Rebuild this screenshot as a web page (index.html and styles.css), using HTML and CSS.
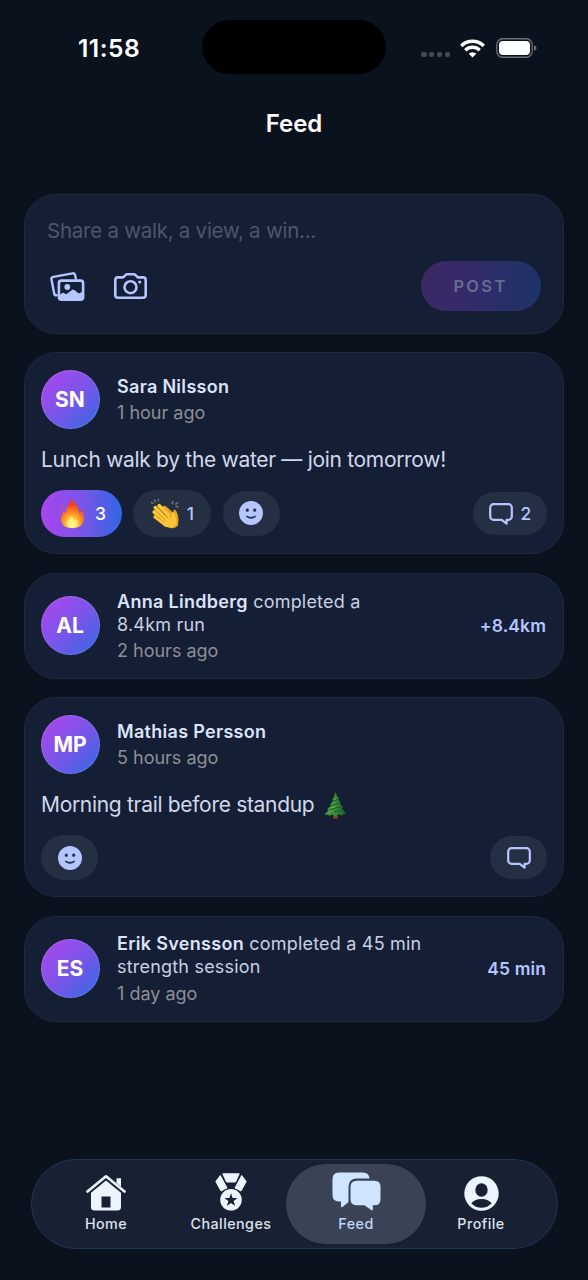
FILE: index.html
```html
<!DOCTYPE html>
<html lang="en">
<head>
<meta charset="utf-8">
<title>Feed</title>
<link rel="stylesheet" href="styles.css">
</head>
<body>
<svg class="defs" width="0" height="0" aria-hidden="true">
  <symbol id="smile" viewBox="0 0 24 24"><path fill="#b4c5ff" fill-rule="evenodd" d="M12 0a12 12 0 1 0 0 24a12 12 0 0 0 0-24zM8.300 7.600a1.600 1.600 0 0 1 0 3.200a1.600 1.600 0 0 1 0-3.200zm7.400 0a1.600 1.600 0 0 1 0 3.200a1.600 1.600 0 0 1 0-3.200zM7.600 14.600q4.300 2.800 8.800 0l.6 1.200q-5 4-10 0z"/></symbol>
  <symbol id="comment" viewBox="0 0 24 22"><path fill="none" stroke="#b4c5ff" stroke-width="2.200" stroke-linejoin="round" d="M4.500 1.200h15a3.300 3.300 0 0 1 3.300 3.300v9a3.300 3.300 0 0 1-3.300 3.300h-1.900v3.900L12.700 16.800H4.500a3.300 3.300 0 0 1-3.300-3.300V4.500A3.300 3.300 0 0 1 4.500 1.200z"/></symbol>
</svg>
<div class="screen">
  <header class="status">
    <span class="clock">11:58</span>
    <span class="island"></span>
    <span class="indicators">
      <span class="dots"><i></i><i></i><i></i><i></i></span>
      <svg class="wifi" viewBox="0 0 25 19"><g fill="none" stroke="#fff" stroke-width="3.500"><path d="M1.300 6.900a16 16 0 0 1 22.400 0"/><path d="M5.300 11.300a10.300 10.300 0 0 1 14.400 0"/></g><path fill="#fff" d="M12.500 18.500l-3.800-3.800a5.500 5.500 0 0 1 7.600 0z"/></svg>
      <svg class="battery" viewBox="0 0 41 20"><rect x=".75" y=".75" width="35.500" height="18.500" rx="6" fill="none" stroke="#6b7078" stroke-width="1.300"/><rect x="3" y="3" width="31" height="14" rx="4" fill="#fff"/><path d="M38 7.200q2.600.900 2.600 2.800T38 12.800z" fill="#6b7078"/></svg>
    </span>
  </header>
  <h1 class="title">Feed</h1>
  <main class="feed">
    <section class="card composer">
      <p class="placeholder">Share a walk, a view, a win...</p>
      <div class="composer-row">
        <svg class="ic-gallery" viewBox="0 0 35 29"><path fill="none" stroke="#b4c5ff" stroke-width="2.400" stroke-linejoin="round" stroke-linecap="round" d="M6.500 23.300Q4.500 23.500 4.200 21.500L1.500 7.500Q1.100 5.300 3.300 4.900L22.500 1.400Q24.600 1 25.100 3l.7 3.600"/><path fill="#b4c5ff" fill-rule="evenodd" d="M11.300 7.300h19.400a3.700 3.700 0 0 1 3.700 3.700v14.200a3.700 3.700 0 0 1-3.700 3.700H11.300a3.700 3.700 0 0 1-3.700-3.700V11a3.700 3.700 0 0 1 3.700-3.700zm.3 2.600Q10.200 9.900 10.200 11.300V22.500l2.100-1.400q1-.6 2 .1l2 1.100 5.500-4.300q1.200-.9 2.500.1l4.500 3.500 3-1.600V11.300q0-1.400-1.400-1.400z"/><circle cx="17.300" cy="15" r="2.900" fill="#b4c5ff"/></svg>
        <svg class="ic-camera" viewBox="0 0 33 26"><path fill="none" stroke="#b4c5ff" stroke-width="2.600" stroke-linejoin="round" d="M4 4.400h5.200L11.700 1.900q.5-.6 1.500-.6h6.600q1 0 1.500.6l2.500 2.500H29q2.700 0 2.700 2.700v14.900q0 2.700-2.700 2.700H4q-2.700 0-2.700-2.700V7.100Q1.300 4.400 4 4.400z"/><circle cx="16.500" cy="14.200" r="6" fill="none" stroke="#b4c5ff" stroke-width="2.600"/><circle cx="25.700" cy="9" r="1.600" fill="#b4c5ff"/></svg>
        <button class="post-btn">POST</button>
      </div>
    </section>

    <article class="card">
      <div class="who">
        <span class="avatar">SN</span>
        <div class="meta"><p><b>Sara Nilsson</b></p><time>1 hour ago</time></div>
      </div>
      <p class="body">Lunch walk by the water — join tomorrow!</p>
      <div class="actions tall">
        <span class="pill fire"><svg class="e-fire" viewBox="0 0 26 31"><defs><radialGradient id="f" cx=".48" cy=".88" r=".72"><stop offset="0" stop-color="#fff9a0"/><stop offset=".25" stop-color="#ffd84a"/><stop offset=".55" stop-color="#ff9426"/><stop offset="1" stop-color="#f43a18"/></radialGradient></defs><path fill="url(#f)" d="M12 .5C10.500 5 6.500 8 6 14.500 5.500 16 4.800 15.500 4.300 13 1.500 16.500.5 19 1 22.500 1.800 28 6.500 30.800 13 30.800S24.500 27.500 25 21.500c.2-4-1.300-6.500-1-10.500-2 .8-2.700 2.500-3 5.500C18.500 11 20 9.500 16.500 5.500 14.500 3.500 12.500 3 12 .5z"/><path fill="#f4562a" d="M4 7.500q-2.500 2-2 4 2-.5 2-4z"/><path fill="#fff18c" opacity=".8" d="M12 18c-1 3.500-5 5-4.500 8.500.4 3 3 4 5.500 4s5.500-1.500 5.500-5c0-2-1-2.500-1.500-4.500-1 .5-1.500 1.500-1.800 2.500C14 21.500 14 20 12 18z"/></svg><span>3</span></span>
        <span class="pill clap"><svg class="e-clap" viewBox="0 0 30 31"><g stroke="#77797a" stroke-width="1.500" stroke-linecap="round"><path d="M4.500 1.500l1 2M1.500 4l1.500 1M8.500 1l.2 1.500M23.500 3l-.6 2.500M28.500 4.500l-2 1.200M29 8.500l-2-.200"/></g><path fill="#e9a51d" d="M13 8.500q2-2 4 0l8 7-1-3q1.500-1.800 3.200.5 2 4 2.300 8.500L29 28q-3 3.500-8 2.500z"/><g stroke="#fcc63a" stroke-width="3.900" stroke-linecap="round"><path d="M9.500 7.500l13 13M5.700 9.500l13 14M4.500 14l12.500 11.500M5.500 19l11 8.500"/></g><path fill="#fcc63a" d="M21 19.500l1-3.500q.5-2.500 3-1.500l2 6q1.500 6-2 8.500-4 2.500-8.500 0L13 26z"/><g fill="none" stroke="#c9811a" stroke-width=".8" stroke-linecap="round"><path d="M8.300 9.500l10 10.500M6 12.700l10 9.800M6 17.300l8 7M21.200 19.500l.8-3"/></g></svg><span>1</span></span>
        <span class="pill add"><svg class="ic-smile"><use href="#smile"/></svg></span>
        <span class="pill talk"><svg class="ic-comment"><use href="#comment"/></svg><span>2</span></span>
      </div>
    </article>

    <article class="card event">
      <span class="avatar">AL</span>
      <div class="meta"><p><b>Anna Lindberg</b> completed a 8.4km&nbsp;run</p><time>2 hours ago</time></div>
      <strong class="stat">+8.4km</strong>
    </article>

    <article class="card second">
      <div class="who">
        <span class="avatar">MP</span>
        <div class="meta"><p><b>Mathias Persson</b></p><time>5 hours ago</time></div>
      </div>
      <p class="body">Morning trail before standup <svg class="e-tree" viewBox="0 0 24 28"><defs><linearGradient id="t"><stop offset="0" stop-color="#4fa23e"/><stop offset=".5" stop-color="#3a8b36"/><stop offset="1" stop-color="#155a2f"/></linearGradient></defs><path fill="#8a4a1c" d="M10 23h4l.5 4.500h-5z"/><path fill="url(#t)" d="M12 0l1.500 4 2.500 3-1.500.3 3.500 4-1.800.4 4 4.300-2 .4L23.500 23l-3-.3-2 2-3-1.500L12 25l-3.500-1.700-3 1.500-1.500-1.300-3.500.5L5 18.500l-2-.3 5-4.700-2-.2L10 9l-1.800-.2L10.500 5z"/><path fill="none" stroke="#16582b" stroke-width=".9" d="M9 9.500l5-1.700M8 13.500l8-2.500M6 18.300l12-3.200M5 22l15-3.500"/><path fill="none" stroke="#79c062" stroke-width=".7" d="M10 7.500l2.500-.7M8.500 12l4-1.200M6.500 16.800l5-1.300M4 22l6-1.700"/></svg></p>
      <div class="actions">
        <span class="pill add"><svg class="ic-smile"><use href="#smile"/></svg></span>
        <span class="pill talk empty"><svg class="ic-comment"><use href="#comment"/></svg></span>
      </div>
    </article>

    <article class="card event">
      <span class="avatar">ES</span>
      <div class="meta"><p><b>Erik Svensson</b> completed a 45 min strength session</p><time>1 day ago</time></div>
      <strong class="stat">45 min</strong>
    </article>
  </main>

  <nav class="tabs">
    <a class="tab"><svg width="40" height="37" viewBox="0 0 40 37"><path fill="none" stroke="#ebf4ff" stroke-width="2.700" stroke-linecap="round" stroke-linejoin="round" d="M1.500 17.500L20 2.300l18.500 15.200"/><path fill="#ebf4ff" d="M30.500 4.300h4.500v8.500l-4.500-3.700z"/><path fill="#ebf4ff" fill-rule="evenodd" d="M20 6.500L35 18.700V33q0 3.500-3.500 3.500h-23Q5 36.500 5 33V18.700zM15.500 22.500v11h9v-11z"/></svg><span>Home</span></a>
    <a class="tab"><svg width="32" height="38" viewBox="0 0 32 38"><path fill="#ebf4ff" stroke="#ebf4ff" stroke-linejoin="round" d="M7.800.8h16.400L20.500 9h-9zM5.300 2.500L.8 8.500l5.200 9.500 6-3zM26.700 2.500l4.500 6-5.200 9.500-6-3z"/><circle cx="16" cy="27" r="12" fill="#182033"/><path fill="#ebf4ff" fill-rule="evenodd" d="M16 16a10.800 10.800 0 0 0 0 21.600A10.800 10.800 0 0 0 16 16zm0 4.300l1.600 4.700h5l-4 3.100 1.500 4.900-4.100-3-4.100 3 1.500-4.900-4-3.100h5z"/></svg><span>Challenges</span></a>
    <a class="tab active"><svg width="49" height="39" viewBox="0 0 49 39"><path fill="#cfe5ff" d="M7 .5h24q6 0 6.500 6H25q-8.500 0-8.500 8.500v15L10.500 35q-1.500 1-1.500-1v-4.500H7Q.5 29.500.5 23V7Q.5.5 7 .5z"/><path fill="#cfe5ff" d="M25 8.700h17.500q6 0 6 6v12.500q0 6-6 6h-1.700v4q0 2-1.600.9L32.500 33.200H25q-6.500 0-6.500-6V14.700q0-6 6.500-6z"/></svg><span>Feed</span></a>
    <a class="tab"><svg width="35" height="35" viewBox="0 0 35 35"><circle cx="17.500" cy="17.500" r="17.200" fill="#ebf4ff"/><ellipse cx="17.500" cy="14" rx="6.200" ry="6.700" fill="#182033"/><path fill="#182033" d="M7.300 27.300q3.500-4.300 10.200-4.300t10.200 4.300q-4.200 4.500-10.200 4.500T7.300 27.300z"/></svg><span>Profile</span></a>
  </nav>
</div>
</body>
</html>
```
FILE: styles.css
```css
* { box-sizing: border-box; margin: 0; padding: 0; }
body { background: #0a121e; font-family: Inter, "Liberation Sans", sans-serif; color: #dbe3f4; }
svg { display: block; flex: none; }
.defs { position: absolute; }
.screen { width: 588px; height: 1280px; display: flex; flex-direction: column; }

.status { height: 98px; padding: 20px 51px 0 78px; display: grid; grid-template-columns: 124px 184px 1fr; align-items: start; }
.clock { color: #fff; font-size: 24.500px; font-weight: 600; line-height: 57px; letter-spacing: .5px; }
.island { height: 54px; border-radius: 27px; background: #000; }
.indicators { height: 54px; display: flex; align-items: center; justify-content: flex-end; padding-top: 2px; }
.dots { display: flex; gap: 2.500px; margin: 13px 10px 0 0; }
.dots i { width: 5.300px; height: 5.300px; border-radius: 2px; background: #444a56; }
.wifi { width: 25px; height: 19px; margin-right: 11px; }
.battery { width: 41px; height: 20px; }
.title { height: 96px; color: #fff; font-size: 24px; line-height: 52px; font-weight: 600; text-align: center; }

.feed { flex: 1; padding: 0 24px; display: flex; flex-direction: column; gap: 18.400px; }
.card { flex: none; height: 202px; background: #141e35; border: 1.500px solid #1f2a40; border-radius: 32px; padding: 16px; }
.second { height: 200px; }
.composer { height: 140px; padding: 21px 22px; }
.placeholder { color: #4d5668; font-size: 20.500px; line-height: 30px; letter-spacing: -.250px; }
.composer-row { display: flex; align-items: center; height: 50px; margin-top: 15px; padding-left: 3px; }
.ic-gallery { width: 35px; height: 29px; }
.ic-camera { width: 33px; height: 26px; margin-left: 29px; }
.post-btn { margin-left: auto; width: 120px; height: 50px; border: 0; border-radius: 25px; background: linear-gradient(90deg, #3b2863, #38296a 30%, #1d3367); color: #696c91; font: 600 16.500px Inter, sans-serif; letter-spacing: 2.300px; padding-right: 1px; }

.who { display: flex; align-items: center; gap: 17px; height: 60px; }
.avatar { flex: none; width: 59px; height: 59px; border-radius: 50%; border: 1.500px solid rgba(255,255,255,.15); background: linear-gradient(135deg, #a847ed 10%, #7b55e8 50%, #3b66e5 92%) border-box; color: #fff; font-size: 21px; font-weight: 700; display: flex; align-items: center; justify-content: center; padding-right: 1px; }
.meta { font-size: 18px; line-height: 23px; color: #c8d0e2; letter-spacing: .2px; }
.meta b { font-weight: 600; color: #dbe3f9; letter-spacing: .300px; }
.meta time { display: block; padding-top: 3px; line-height: 23px; color: #8d8f97; letter-spacing: 0; }
.body { font-size: 21px; line-height: 30px; margin-top: 16px; color: #d0d8ea; white-space: nowrap; display: flex; align-items: center; letter-spacing: -.310px; }
.actions { display: flex; align-items: center; gap: 11.500px; height: 45px; margin-top: 15px; }
.tall { height: 47px; margin-top: 14.500px; }
.pill { display: flex; align-items: center; justify-content: center; border-radius: 24px; background: #242f43; color: #b4c5ff; font-size: 17.500px; font-weight: 500; }
.fire { width: 81px; height: 47px; gap: 10px; padding-left: 3px; color: #fff; background: linear-gradient(90deg, #a844ee, #7c55e9 50%, #2f66e3); }
.clap { width: 78px; height: 47px; gap: 8px; margin-left: -.500px; }
.add { width: 57px; height: 45px; }
.talk { width: 74px; height: 43px; margin-left: auto; gap: 8px; }
.empty { width: 57px; }
.e-fire { width: 25px; height: 31px; }
.e-clap { width: 29px; height: 31px; }
.e-tree { width: 23px; height: 27px; margin-left: 10px; }
.ic-smile { width: 24px; height: 24px; }
.ic-comment { width: 24px; height: 22px; margin-top: 1px; }

.event { height: 106px; display: flex; align-items: center; gap: 17px; }
.event .meta { max-width: 320px; }
.event time { padding-top: 3.500px; }
.stat { margin-left: auto; padding-right: 1px; color: #b4c5ff; font-size: 17.500px; font-weight: 600; letter-spacing: .100px; white-space: nowrap; }

.tabs { width: 527px; height: 90px; margin: 0 0 31.500px 30.500px; border: 1.500px solid #213658; border-radius: 45px; background: #182033; display: grid; grid-template-columns: repeat(4, 125px); justify-content: center; align-items: center; padding-right: 1px; }
.tab { height: 80px; display: flex; flex-direction: column; align-items: center; justify-content: flex-end; padding-bottom: 9.500px; color: #dce3ed; font-size: 14.300px; font-weight: 500; line-height: 20px; letter-spacing: .450px; }
.tab svg { margin-bottom: 3px; }
.active { width: 140px; margin-left: -7.500px; border-radius: 40px; background: #394355; color: #c0d8f7; }
```
